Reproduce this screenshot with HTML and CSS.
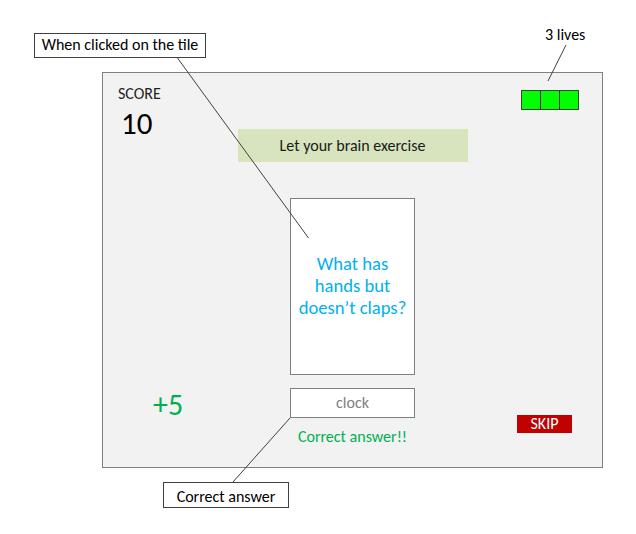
FILE: index.html
```html
<!DOCTYPE html>
<html>
<head>
<meta charset="utf-8">
<link rel="stylesheet" href="styles.css">
</head>
<body>
<div class="stage">
  <div class="panel">
    <div class="col-left">
      <div class="score-label">SCORE</div>
      <div class="score-value">10</div>
      <div class="bonus">+5</div>
    </div>
    <div class="col-center">
      <div class="banner">Let your brain exercise</div>
      <div class="tile">What has<br>hands but<br>doesn’t claps?</div>
      <div class="answer">clock</div>
      <div class="correct">Correct answer!!</div>
    </div>
    <div class="col-right">
      <div class="lives"><span></span><span></span><span></span></div>
      <div class="skip">SKIP</div>
    </div>
  </div>

  <svg class="leaders" width="636" height="534" viewBox="0 0 636 534">
    <line x1="177.5" y1="58" x2="308.5" y2="238" />
    <line x1="566" y1="45" x2="548" y2="81" />
    <line x1="290" y1="418" x2="233" y2="482" />
  </svg>
  <div class="callout callout-tile">When clicked on the tile</div>
  <div class="note note-lives">3 lives</div>
  <div class="callout callout-answer">Correct answer</div>
</div>
</body>
</html>
```
FILE: styles.css
```css
* { box-sizing: border-box; }
html, body { margin: 0; padding: 0; background: #fff; }
body {
  font-family: Carlito, Lato, "Liberation Sans", sans-serif;
  color: #000;
}
.stage {
  position: relative;
  width: 636px;
  height: 534px;
  padding: 72px 0 0 102px;
}
.panel {
  width: 501px;
  height: 396px;
  background: #f2f2f2;
  border: 1px solid #7f7f7f;
  display: grid;
  grid-template-columns: 1fr 230px 1fr;
}
.col-left {
  display: flex;
  flex-direction: column;
  padding-left: 15px;
}
.score-label {
  margin-top: 12px;
  font-size: 16px;
  line-height: 18px;
  color: #222;
}
.score-value {
  margin-top: 4px;
  margin-left: 3px;
  font-size: 31px;
  line-height: 32px;
}
.bonus {
  margin-top: 250px;
  margin-left: 35px;
  font-size: 30px;
  line-height: 32px;
  color: #00b050;
}
.col-center {
  display: flex;
  flex-direction: column;
  align-items: center;
}
.banner {
  margin-top: 56px;
  width: 230px;
  height: 33px;
  background: #d7e4bd;
  font-size: 16px;
  line-height: 33px;
  text-align: center;
  color: #1a1a1a;
}
.tile {
  margin-top: 36px;
  width: 125px;
  height: 177px;
  background: #fff;
  border: 1px solid #7f7f7f;
  display: flex;
  align-items: center;
  justify-content: center;
  text-align: center;
  color: #00b0f0;
  font-size: 18.6px;
  line-height: 22px;
  padding-bottom: 2px;
}
.answer {
  margin-top: 13px;
  width: 125px;
  height: 30px;
  background: #fff;
  border: 1px solid #7f7f7f;
  text-align: center;
  font-size: 16px;
  line-height: 28px;
  color: #7f7f7f;
}
.correct {
  margin-top: 9px;
  font-size: 16px;
  line-height: 20px;
  color: #00b050;
}
.col-right {
  display: flex;
  flex-direction: column;
  align-items: flex-end;
}
.lives {
  margin-top: 17px;
  margin-right: 23px;
  width: 58px;
  height: 20px;
  border: 1px solid #404040;
  background: #00ff00;
  display: flex;
}
.lives span {
  flex: 1;
  border-left: 1px solid #202020;
}
.lives span:first-child { border-left: 0; }
.skip {
  margin-top: 305px;
  margin-right: 30px;
  width: 55px;
  height: 18px;
  background: #c00000;
  color: #fff;
  font-size: 16px;
  line-height: 18px;
  text-align: center;
}
.leaders {
  position: absolute;
  left: 0;
  top: 0;
  pointer-events: none;
}
.leaders line {
  stroke: #404040;
  stroke-width: 1;
}
.callout {
  position: absolute;
  background: #fff;
  border: 1px solid #404040;
  font-size: 16px;
  line-height: 22px;
  text-align: center;
  color: #000;
}
.callout-tile {
  left: 34px;
  top: 33px;
  width: 172px;
  height: 25px;
}
.callout-answer {
  left: 163px;
  top: 482px;
  width: 126px;
  height: 26px;
  line-height: 27px;
}
.note {
  position: absolute;
  font-size: 16px;
  line-height: 18px;
}
.note-lives {
  left: 545px;
  top: 26px;
}
```
